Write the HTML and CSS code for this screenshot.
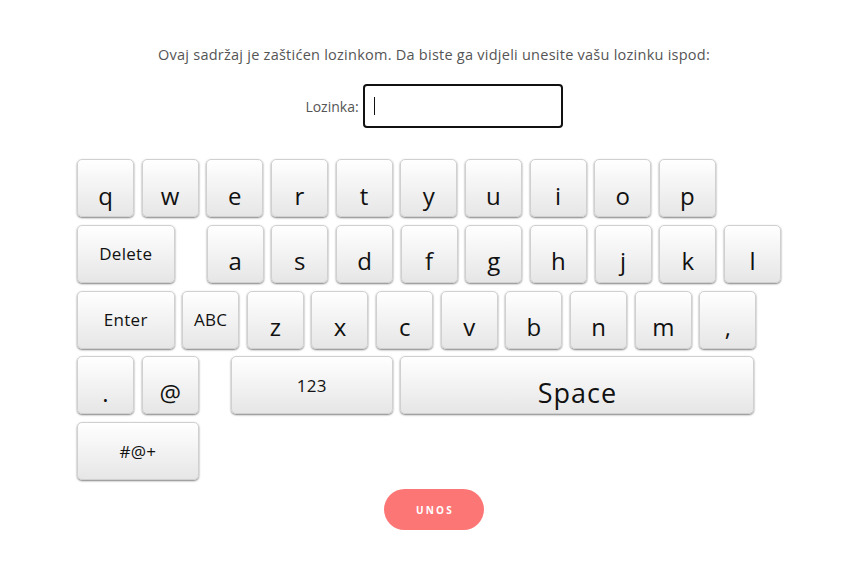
FILE: index.html
```html
<!DOCTYPE html>
<html lang="hr">
<head>
<meta charset="utf-8">
<title>Lozinka</title>
<link rel="stylesheet" href="styles.css">
</head>
<body>
<main class="page">
  <p class="intro">Ovaj sadržaj je zaštićen lozinkom. Da biste ga vidjeli unesite vašu lozinku ispod:</p>
  <div class="pw-row">
    <label class="pw-label" for="pw">Lozinka:</label>
    <div class="pw-input" id="pw"><span class="caret"></span></div>
  </div>
  <div class="keyboard">
    <div class="row">
      <div class="key big">q</div><div class="key big">w</div><div class="key big">e</div><div class="key big">r</div><div class="key big">t</div><div class="key big">y</div><div class="key big">u</div><div class="key big">i</div><div class="key big">o</div><div class="key big">p</div>
    </div>
    <div class="row">
      <div class="key wide small">Delete</div>
      <div class="key big push">a</div><div class="key big">s</div><div class="key big">d</div><div class="key big">f</div><div class="key big">g</div><div class="key big">h</div><div class="key big">j</div><div class="key big">k</div><div class="key big">l</div>
    </div>
    <div class="row">
      <div class="key wide small">Enter</div>
      <div class="key small">ABC</div>
      <div class="key big">z</div><div class="key big">x</div><div class="key big">c</div><div class="key big">v</div><div class="key big">b</div><div class="key big">n</div><div class="key big">m</div><div class="key big">,</div>
    </div>
    <div class="row">
      <div class="key big">.</div><div class="key big">@</div>
      <div class="key small num push">123</div>
      <div class="key big space">Space</div>
    </div>
    <div class="row">
      <div class="key double small">#@+</div>
    </div>
  </div>
  <button class="submit" type="button">UNOS</button>
</main>
</body>
</html>
```

FILE: styles.css
```css
html, body {
  margin: 0;
  padding: 0;
  background: #ffffff;
}

.page {
  font-family: "Open Sans", "Liberation Sans", sans-serif;
  display: flex;
  flex-direction: column;
  align-items: center;
  padding-left: 13px;
}

.intro {
  margin: 45px 0 0;
  font-size: 14.5px;
  line-height: 20px;
  color: #555555;
  letter-spacing: 0.25px;
}

.pw-row {
  margin-top: 19px;
  display: flex;
  align-items: center;
  gap: 4px;
}

.pw-label {
  font-size: 14px;
  color: #555555;
}

.pw-input {
  box-sizing: border-box;
  width: 200px;
  height: 44px;
  border: 2px solid #111111;
  border-radius: 4px;
  display: flex;
  align-items: center;
  padding-left: 9px;
}

.caret {
  width: 1px;
  height: 18px;
  background: #111111;
}

.keyboard {
  align-self: flex-start;
  margin: 31px 0 0 64px;
  display: flex;
  flex-direction: column;
  gap: 7.75px;
}

.row {
  display: flex;
  gap: 7.67px;
}

.key {
  box-sizing: border-box;
  width: 57px;
  height: 58px;
  border: 1px solid #d0d0d0;
  border-radius: 5px;
  background: linear-gradient(#ffffff, #e6e6e6);
  box-shadow: 0 1px 2px rgba(0, 0, 0, 0.5);
  color: #111111;
  display: flex;
  justify-content: center;
  align-items: center;
}

.big {
  font-size: 24px;
  padding-top: 14px;
}

.small {
  font-size: 17px;
  letter-spacing: 0.3px;
}

.wide {
  width: 97.5px;
}

.double {
  width: 121.7px;
}

.num {
  width: 162px;
}

.space {
  width: 354px;
  font-size: 27px;
  letter-spacing: 1px;
}

.push {
  margin-left: 24.5px;
}

.submit {
  margin-top: 9px;
  width: 100px;
  height: 41px;
  border: none;
  border-radius: 21px;
  background: #fd7676;
  color: #ffffff;
  font-family: "Open Sans", "Liberation Sans", sans-serif;
  font-weight: 700;
  font-size: 10px;
  letter-spacing: 2.2px;
  padding: 0 0 0 2px;
}
```
